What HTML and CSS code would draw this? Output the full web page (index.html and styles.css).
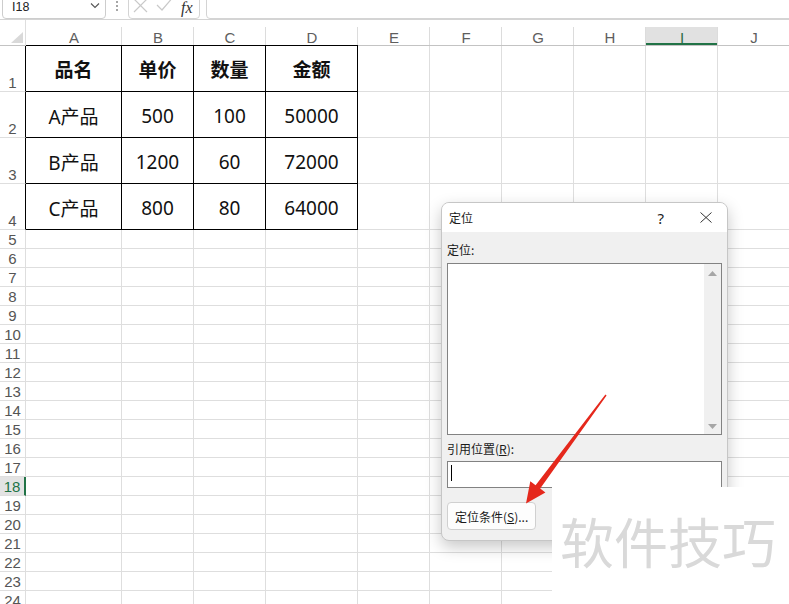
FILE: index.html
```html
<!DOCTYPE html>
<html lang="zh">
<head>
<meta charset="utf-8">
<link rel="stylesheet" href="styles.css">
</head>
<body>
<div class="app">
  <div class="toolbar">
    <div class="namebox"><span class="ref">I18</span><svg class="chev" width="10" height="6" viewBox="0 0 10 6"><polyline points="1,0.5 5,4.5 9,0.5" fill="none" stroke="#555" stroke-width="1.1"/></svg></div>
    <svg class="vdots" width="4" height="12" viewBox="0 0 4 12"><circle cx="2" cy="2" r="1" fill="#888"/><circle cx="2" cy="6" r="1" fill="#888"/><circle cx="2" cy="10" r="1" fill="#888"/></svg>
    <div class="fxbox">
      <svg class="ico-x" width="15" height="14" viewBox="0 0 15 14"><path d="M1 0 L14 13 M14 0 L1 13" stroke="#c9c9c9" stroke-width="1.2" fill="none"/></svg>
      <svg class="ico-ok" width="16" height="13" viewBox="0 0 16 13"><polyline points="1,6 6,11 15,0.5" fill="none" stroke="#c9c9c9" stroke-width="1.2"/></svg>
      <span class="fx">fx</span>
    </div>
    <div class="formula"></div>
  </div>

  <div class="sheet">
    <div class="corner"><svg width="12" height="11" viewBox="0 0 12 11"><polygon points="12,0 12,11 0,11" fill="#d9d9d9"/></svg></div>
    <div class="ch tb">A</div><div class="ch tb">B</div><div class="ch tb">C</div><div class="ch tb">D</div><div class="ch">E</div><div class="ch">F</div><div class="ch">G</div><div class="ch">H</div><div class="ch sel">I</div><div class="ch">J</div>

    <div class="rh tl">1</div><div class="c t hd">品名</div><div class="c t hd">单价</div><div class="c t hd">数量</div><div class="c t hd">金额</div><div class="c"></div><div class="c"></div><div class="c"></div><div class="c"></div><div class="c"></div><div class="c"></div>
    <div class="rh tl">2</div><div class="c t">A产品</div><div class="c t">500</div><div class="c t">100</div><div class="c t">50000</div><div class="c"></div><div class="c"></div><div class="c"></div><div class="c"></div><div class="c"></div><div class="c"></div>
    <div class="rh tl">3</div><div class="c t">B产品</div><div class="c t">1200</div><div class="c t">60</div><div class="c t">72000</div><div class="c"></div><div class="c"></div><div class="c"></div><div class="c"></div><div class="c"></div><div class="c"></div>
    <div class="rh tl">4</div><div class="c t">C产品</div><div class="c t">800</div><div class="c t">80</div><div class="c t">64000</div><div class="c"></div><div class="c"></div><div class="c"></div><div class="c"></div><div class="c"></div><div class="c"></div>

    <div class="rh">5</div><div class="c"></div><div class="c"></div><div class="c"></div><div class="c"></div><div class="c"></div><div class="c"></div><div class="c"></div><div class="c"></div><div class="c"></div><div class="c"></div>
    <div class="rh">6</div><div class="c"></div><div class="c"></div><div class="c"></div><div class="c"></div><div class="c"></div><div class="c"></div><div class="c"></div><div class="c"></div><div class="c"></div><div class="c"></div>
    <div class="rh">7</div><div class="c"></div><div class="c"></div><div class="c"></div><div class="c"></div><div class="c"></div><div class="c"></div><div class="c"></div><div class="c"></div><div class="c"></div><div class="c"></div>
    <div class="rh">8</div><div class="c"></div><div class="c"></div><div class="c"></div><div class="c"></div><div class="c"></div><div class="c"></div><div class="c"></div><div class="c"></div><div class="c"></div><div class="c"></div>
    <div class="rh">9</div><div class="c"></div><div class="c"></div><div class="c"></div><div class="c"></div><div class="c"></div><div class="c"></div><div class="c"></div><div class="c"></div><div class="c"></div><div class="c"></div>
    <div class="rh">10</div><div class="c"></div><div class="c"></div><div class="c"></div><div class="c"></div><div class="c"></div><div class="c"></div><div class="c"></div><div class="c"></div><div class="c"></div><div class="c"></div>
    <div class="rh">11</div><div class="c"></div><div class="c"></div><div class="c"></div><div class="c"></div><div class="c"></div><div class="c"></div><div class="c"></div><div class="c"></div><div class="c"></div><div class="c"></div>
    <div class="rh">12</div><div class="c"></div><div class="c"></div><div class="c"></div><div class="c"></div><div class="c"></div><div class="c"></div><div class="c"></div><div class="c"></div><div class="c"></div><div class="c"></div>
    <div class="rh">13</div><div class="c"></div><div class="c"></div><div class="c"></div><div class="c"></div><div class="c"></div><div class="c"></div><div class="c"></div><div class="c"></div><div class="c"></div><div class="c"></div>
    <div class="rh">14</div><div class="c"></div><div class="c"></div><div class="c"></div><div class="c"></div><div class="c"></div><div class="c"></div><div class="c"></div><div class="c"></div><div class="c"></div><div class="c"></div>
    <div class="rh">15</div><div class="c"></div><div class="c"></div><div class="c"></div><div class="c"></div><div class="c"></div><div class="c"></div><div class="c"></div><div class="c"></div><div class="c"></div><div class="c"></div>
    <div class="rh">16</div><div class="c"></div><div class="c"></div><div class="c"></div><div class="c"></div><div class="c"></div><div class="c"></div><div class="c"></div><div class="c"></div><div class="c"></div><div class="c"></div>
    <div class="rh">17</div><div class="c"></div><div class="c"></div><div class="c"></div><div class="c"></div><div class="c"></div><div class="c"></div><div class="c"></div><div class="c"></div><div class="c"></div><div class="c"></div>
    <div class="rh sel">18</div><div class="c"></div><div class="c"></div><div class="c"></div><div class="c"></div><div class="c"></div><div class="c"></div><div class="c"></div><div class="c"></div><div class="c"></div><div class="c"></div>
    <div class="rh">19</div><div class="c"></div><div class="c"></div><div class="c"></div><div class="c"></div><div class="c"></div><div class="c"></div><div class="c"></div><div class="c"></div><div class="c"></div><div class="c"></div>
    <div class="rh">20</div><div class="c"></div><div class="c"></div><div class="c"></div><div class="c"></div><div class="c"></div><div class="c"></div><div class="c"></div><div class="c"></div><div class="c"></div><div class="c"></div>
    <div class="rh">21</div><div class="c"></div><div class="c"></div><div class="c"></div><div class="c"></div><div class="c"></div><div class="c"></div><div class="c"></div><div class="c"></div><div class="c"></div><div class="c"></div>
    <div class="rh">22</div><div class="c"></div><div class="c"></div><div class="c"></div><div class="c"></div><div class="c"></div><div class="c"></div><div class="c"></div><div class="c"></div><div class="c"></div><div class="c"></div>
    <div class="rh">23</div><div class="c"></div><div class="c"></div><div class="c"></div><div class="c"></div><div class="c"></div><div class="c"></div><div class="c"></div><div class="c"></div><div class="c"></div><div class="c"></div>
    <div class="rh">24</div><div class="c"></div><div class="c"></div><div class="c"></div><div class="c"></div><div class="c"></div><div class="c"></div><div class="c"></div><div class="c"></div><div class="c"></div><div class="c"></div>
  </div>
</div>

<div class="dialog">
  <div class="dtitle">
    <span class="dname">定位</span>
    <span class="help">?</span>
    <svg class="close" width="12" height="11" viewBox="0 0 12 11"><path d="M0.5 0.5 L11.5 10.5 M11.5 0.5 L0.5 10.5" stroke="#333" stroke-width="1" fill="none"/></svg>
  </div>
  <div class="dbody">
    <div class="lbl">定位:</div>
    <div class="list">
      <div class="sb">
        <svg width="9" height="5" viewBox="0 0 9 5"><polygon points="4.5,0 9,5 0,5" fill="#a6a6a6"/></svg>
        <svg width="9" height="5" viewBox="0 0 9 5"><polygon points="0,0 9,0 4.5,5" fill="#a6a6a6"/></svg>
      </div>
    </div>
    <div class="lbl lbl2">引用位置(<u>R</u>):</div>
    <div class="input"><span class="caret"></span></div>
    <button class="btn">定位条件(<u>S</u>)...</button>
  </div>
</div>

<div class="wm">软件技巧</div>

<svg class="arrow" width="789" height="604" viewBox="0 0 789 604">
  <polygon points="606.6,395.4 540.2,488.6 545.4,492.5 526,503.5 530.3,481.3 535.6,485.2 605.4,394.6" fill="#e5281c"/>
</svg>
</body>
</html>
```

FILE: styles.css
```css
html, body {
  margin: 0;
  padding: 0;
}
body {
  width: 789px;
  height: 604px;
  overflow: hidden;
  position: relative;
  background: #fff;
  font-family: "Noto Sans CJK SC", "Noto Sans", sans-serif;
  color: #1a1a1a;
}

/* ---------- formula toolbar ---------- */
.toolbar {
  height: 20px;
  box-sizing: border-box;
  border-bottom: 1px solid #d4d4d4;
  display: flex;
  align-items: flex-end;
  overflow: hidden;
  padding-left: 2px;
}
.namebox {
  flex: none;
  width: 104px;
  height: 30px;
  box-sizing: border-box;
  border: 1px solid #cdcdcd;
  border-radius: 4px;
  display: flex;
  align-items: flex-end;
  justify-content: space-between;
  padding: 0 5px 0 9px;
}
.ref {
  font-family: "Liberation Sans", "Noto Sans", sans-serif;
  font-size: 12.5px;
  line-height: 14px;
  margin-bottom: 4px;
  color: #222;
}
.chev {
  margin-bottom: 9px;
}
.vdots {
  flex: none;
  margin: 0 9px 7px 9px;
}
.fxbox {
  flex: none;
  width: 72px;
  height: 30px;
  box-sizing: border-box;
  border: 1px solid #d4d4d4;
  border-radius: 4px;
  display: flex;
  align-items: flex-end;
  padding-left: 4px;
}
.ico-x {
  margin-bottom: 5px;
}
.ico-ok {
  margin: 0 0 6px 8px;
}
.fx {
  font-family: "Liberation Serif", "DejaVu Serif", serif;
  font-style: italic;
  font-size: 16px;
  line-height: 13px;
  margin: 0 0 4px 9px;
  color: #333;
}
.formula {
  flex: 1;
  height: 30px;
  margin: 0 -10px 0 6px;
  box-sizing: border-box;
  border: 1px solid #d4d4d4;
  border-radius: 4px;
}

/* ---------- sheet grid ---------- */
.sheet {
  display: grid;
  grid-template-columns: 26px 96px 72px 72px 92px 72px 72px 72px 72px 72px 72px;
  grid-template-rows: 26px repeat(4, 46px) repeat(20, 19px);
}
.sheet > div {
  box-sizing: border-box;
  border-right: 1px solid #dedede;
  border-bottom: 1px solid #dedede;
}
.corner {
  border-bottom-color: #c3c3c3 !important;
  display: flex;
  align-items: flex-end;
  padding: 0 0 2px 11px;
}
.ch {
  border-right: none !important;
  border-bottom-color: #c3c3c3 !important;
  background: linear-gradient(#dcdcdc, #dcdcdc) right bottom / 1px 18px no-repeat;
  display: flex;
  align-items: flex-end;
  justify-content: center;
  font-family: "Liberation Sans", sans-serif;
  font-size: 15px;
  line-height: 14px;
  color: #5e5e5e;
}
.ch.tb {
  border-bottom-color: #000 !important;
}
.ch.sel {
  background:
    linear-gradient(#dcdcdc, #dcdcdc) right bottom / 1px 18px no-repeat,
    linear-gradient(#217346, #217346) left bottom / 100% 2px no-repeat,
    linear-gradient(#e1e1e1, #e1e1e1) left bottom / 100% 18px no-repeat;
  color: #2f6b45;
}
.rh {
  display: flex;
  align-items: flex-end;
  justify-content: center;
  font-family: "Liberation Sans", sans-serif;
  font-size: 15px;
  line-height: 14px;
  padding-bottom: 1px;
  color: #555;
}
.rh.tl {
  border-right-color: #000 !important;
}
.rh.sel {
  background: #e3e3e3;
  color: #217346;
  border-right: 2px solid #217346 !important;
}
.c {
  display: flex;
  align-items: center;
  justify-content: center;
  font-family: "Noto Sans", "Noto Sans CJK SC", sans-serif;
  font-size: 19px;
  color: #111;
  padding-top: 2px;
}
.c.t {
  border-right-color: #000 !important;
  border-bottom-color: #000 !important;
}
.c.hd {
  font-family: "Noto Sans CJK SC", sans-serif;
  font-weight: 700;
  padding-top: 0;
}

/* ---------- dialog ---------- */
.dialog {
  position: absolute;
  left: 441px;
  top: 202px;
  width: 287px;
  height: 339px;
  box-sizing: border-box;
  border: 1px solid #c6c6c6;
  border-radius: 8px;
  background: #f0f0f0;
  box-shadow: 0 6px 16px rgba(0, 0, 0, 0.22);
  overflow: hidden;
  font-size: 12px;
  color: #1a1a1a;
}
.dtitle {
  height: 29px;
  background: #fff;
  display: flex;
  align-items: center;
  padding: 0 15px 0 7px;
}
.dname {
  flex: 1;
  font-size: 12px;
}
.help {
  font-family: "Noto Sans", sans-serif;
  font-size: 15px;
  margin-right: 36px;
  color: #222;
}
.dbody {
  padding: 10px 5px 0;
}
.lbl {
  line-height: 16px;
}
.lbl2 {
  margin-top: 6px;
}
.list {
  margin-top: 5px;
  height: 172px;
  box-sizing: border-box;
  border: 1px solid #828282;
  background: #fff;
  display: flex;
  justify-content: flex-end;
}
.sb {
  width: 17px;
  box-sizing: border-box;
  background: #f0f0f0;
  display: flex;
  flex-direction: column;
  justify-content: space-between;
  align-items: center;
  padding: 7px 0 5px;
}
.input {
  margin-top: 4px;
  height: 27px;
  box-sizing: border-box;
  border: 1px solid #828282;
  background: #fff;
  padding: 3px 3px;
}
.caret {
  display: block;
  width: 1px;
  height: 16px;
  background: #000;
}
.btn {
  display: block;
  margin-top: 14px;
  width: 89px;
  height: 28px;
  box-sizing: border-box;
  border: 1px solid #d0d0d0;
  border-radius: 4px;
  background: #fdfdfd;
  font-family: "Noto Sans CJK SC", sans-serif;
  font-size: 12px;
  color: #1a1a1a;
  text-align: left;
  padding: 0 0 0 7px;
}

/* ---------- watermark & annotation ---------- */
.wm {
  position: absolute;
  left: 552px;
  top: 487px;
  width: 240px;
  height: 120px;
  box-sizing: border-box;
  background: #fff;
  padding: 27px 0 0 8px;
  font-family: "Noto Sans CJK SC", sans-serif;
  font-size: 54px;
  line-height: 54px;
  color: #d9d9d9;
  white-space: nowrap;
}
.arrow {
  position: absolute;
  left: 0;
  top: 0;
  pointer-events: none;
}
```
